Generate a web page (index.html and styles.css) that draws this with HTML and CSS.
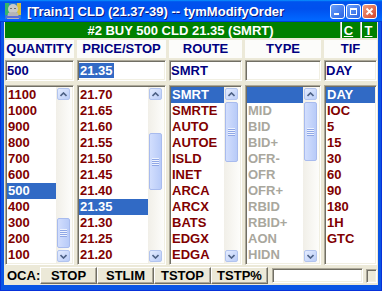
FILE: index.html
```html
<!DOCTYPE html>
<html lang="en">
<head>
    <meta charset="UTF-8">
    <title>tymModifyOrder</title>
    <link rel="stylesheet" href="styles.css">
</head>
<body>

<div class="window">
    <div class="titlebar">
        <svg class="app-icon" width="16" height="16" viewBox="0 0 16 16">
            <rect x="0" y="0" width="16" height="16" fill="#2f7fd0"/>
            <rect x="0" y="0" width="4" height="12" fill="#35b56a"/>
            <rect x="12" y="0" width="4" height="12" fill="#d8c040"/>
            <ellipse cx="8" cy="6" rx="5" ry="5" fill="#c9c9c9"/>
            <path d="M2 16 L3 10 Q8 8 13 10 L14 16 Z" fill="#b5b5b5"/>
            <rect x="5" y="5" width="2" height="1" fill="#707070"/>
            <rect x="9" y="5" width="2" height="1" fill="#707070"/>
            <rect x="1" y="13" width="14" height="2" fill="#5a6fd8"/>
        </svg>
        <span class="title">[Train1] CLD (21.37-39) -- tymModifyOrder</span>
        <div class="title-buttons">
            <span class="tbtn">
                <svg width="13" height="13" viewBox="0 0 13 13"><rect x="3" y="8" width="5" height="2" fill="#fff"/></svg>
            </span>
            <span class="tbtn">
                <svg width="13" height="13" viewBox="0 0 13 13"><rect x="3.5" y="3.5" width="6" height="6" fill="none" stroke="#fff" stroke-width="1"/><rect x="3" y="3" width="7" height="2" fill="#fff"/></svg>
            </span>
            <span class="tbtn close">
                <svg width="13" height="13" viewBox="0 0 13 13"><path d="M3.5 3.5 L9.5 9.5 M9.5 3.5 L3.5 9.5" stroke="#fff" stroke-width="1.8"/></svg>
            </span>
        </div>
    </div>

    <div class="client">
        <div class="orderbar">
            <span class="order-text">#2 BUY 500 CLD 21.35 (SMRT)</span>
            <span class="bar-sep"></span>
            <u class="bar-key">C</u>
            <span class="bar-sep"></span>
            <u class="bar-key">T</u>
        </div>

        <div class="order-grid">
            <div class="head">QUANTITY</div>
            <div class="head">PRICE/STOP</div>
            <div class="head">ROUTE</div>
            <div class="head">TYPE</div>
            <div class="head">TIF</div>

            <div class="field sunken">500</div>
            <div class="field sunken"><span class="sel-text">21.35</span></div>
            <div class="field sunken">SMRT</div>
            <div class="field sunken"></div>
            <div class="field sunken">DAY</div>

            <!-- quantity -->
            <div class="list sunken">
                <div class="items">
                    <div class="item">1100</div>
                    <div class="item">1000</div>
                    <div class="item">900</div>
                    <div class="item">800</div>
                    <div class="item">700</div>
                    <div class="item">600</div>
                    <div class="item selected">500</div>
                    <div class="item">400</div>
                    <div class="item">300</div>
                    <div class="item">200</div>
                    <div class="item">100</div>
                </div>
                <div class="scroll">
                    <div class="sb-btn"><svg width="7" height="5" viewBox="0 0 7 5"><path d="M0.5 4 L3.5 1 L6.5 4" fill="none" stroke="#4d6185" stroke-width="1.6"/></svg></div>
                    <div class="sb-track"><div class="sb-thumb" style="margin-top:118px;height:30px"><span class="grip"></span></div></div>
                    <div class="sb-btn"><svg width="7" height="5" viewBox="0 0 7 5"><path d="M0.5 1 L3.5 4 L6.5 1" fill="none" stroke="#4d6185" stroke-width="1.6"/></svg></div>
                </div>
            </div>

            <!-- price -->
            <div class="list sunken">
                <div class="items">
                    <div class="item">21.70</div>
                    <div class="item">21.65</div>
                    <div class="item">21.60</div>
                    <div class="item">21.55</div>
                    <div class="item">21.50</div>
                    <div class="item">21.45</div>
                    <div class="item">21.40</div>
                    <div class="item selected">21.35</div>
                    <div class="item">21.30</div>
                    <div class="item">21.25</div>
                    <div class="item">21.20</div>
                </div>
                <div class="scroll">
                    <div class="sb-btn"><svg width="7" height="5" viewBox="0 0 7 5"><path d="M0.5 4 L3.5 1 L6.5 4" fill="none" stroke="#4d6185" stroke-width="1.6"/></svg></div>
                    <div class="sb-track"><div class="sb-thumb" style="margin-top:33px;height:57px"><span class="grip"></span></div></div>
                    <div class="sb-btn"><svg width="7" height="5" viewBox="0 0 7 5"><path d="M0.5 1 L3.5 4 L6.5 1" fill="none" stroke="#4d6185" stroke-width="1.6"/></svg></div>
                </div>
            </div>

            <!-- route -->
            <div class="list sunken">
                <div class="items">
                    <div class="item selected">SMRT</div>
                    <div class="item">SMRTE</div>
                    <div class="item">AUTO</div>
                    <div class="item">AUTOE</div>
                    <div class="item">ISLD</div>
                    <div class="item">INET</div>
                    <div class="item">ARCA</div>
                    <div class="item">ARCX</div>
                    <div class="item">BATS</div>
                    <div class="item">EDGX</div>
                    <div class="item">EDGA</div>
                </div>
                <div class="scroll">
                    <div class="sb-btn"><svg width="7" height="5" viewBox="0 0 7 5"><path d="M0.5 4 L3.5 1 L6.5 4" fill="none" stroke="#4d6185" stroke-width="1.6"/></svg></div>
                    <div class="sb-track"><div class="sb-thumb" style="margin-top:2px;height:60px"><span class="grip"></span></div></div>
                    <div class="sb-btn"><svg width="7" height="5" viewBox="0 0 7 5"><path d="M0.5 1 L3.5 4 L6.5 1" fill="none" stroke="#4d6185" stroke-width="1.6"/></svg></div>
                </div>
            </div>

            <!-- type -->
            <div class="list sunken type-list">
                <div class="items">
                    <div class="item selected">&nbsp;</div>
                    <div class="item">MID</div>
                    <div class="item">BID</div>
                    <div class="item">BID+</div>
                    <div class="item">OFR-</div>
                    <div class="item">OFR</div>
                    <div class="item">OFR+</div>
                    <div class="item">RBID</div>
                    <div class="item">RBID+</div>
                    <div class="item">AON</div>
                    <div class="item">HIDN</div>
                </div>
                <div class="scroll">
                    <div class="sb-btn"><svg width="7" height="5" viewBox="0 0 7 5"><path d="M0.5 4 L3.5 1 L6.5 4" fill="none" stroke="#4d6185" stroke-width="1.6"/></svg></div>
                    <div class="sb-track"><div class="sb-thumb" style="margin-top:2px;height:59px"><span class="grip"></span></div></div>
                    <div class="sb-btn"><svg width="7" height="5" viewBox="0 0 7 5"><path d="M0.5 1 L3.5 4 L6.5 1" fill="none" stroke="#4d6185" stroke-width="1.6"/></svg></div>
                </div>
            </div>

            <!-- tif -->
            <div class="list sunken">
                <div class="items">
                    <div class="item selected">DAY</div>
                    <div class="item">IOC</div>
                    <div class="item">5</div>
                    <div class="item">15</div>
                    <div class="item">30</div>
                    <div class="item">60</div>
                    <div class="item">90</div>
                    <div class="item">180</div>
                    <div class="item">1H</div>
                    <div class="item">GTC</div>
                </div>
            </div>
        </div>

        <div class="bottom">
            <span class="oca">OCA:</span>
            <span class="btn">STOP</span>
            <span class="btn">STLIM</span>
            <span class="btn">TSTOP</span>
            <span class="btn">TSTP%</span>
            <span class="textbox sunken"></span>
            <span class="smallbox sunken"></span>
        </div>
    </div>
</div>

</body>
</html>
```

FILE: styles.css
```css
body {
    margin: 0;
    font-family: "Liberation Sans", Arial, sans-serif;
    font-size: 13px;
    font-weight: bold;
}
.window {
    width: 382px;
    height: 291px;
    display: flex;
    flex-direction: column;
    background: #0a55e4;
    box-shadow: inset 1px 0 #0831d9, inset -1px 0 #0831d9, inset 0 -1px #0831d9;
}
.titlebar {
    height: 22px;
    display: flex;
    align-items: center;
    padding-left: 5px;
    color: #fff;
    background: linear-gradient(180deg, #0997ff, #0053ee 8%, #0050ee 40%, #06f 88%, #06f 93%, #005bff 95%, #003dd7 96%, #003dd7);
}
.app-icon {
    flex: none;
}
.title {
    margin-left: 6px;
    flex: 1;
    white-space: nowrap;
    text-shadow: 1px 1px #0a1883;
}
.title-buttons {
    display: flex;
    gap: 1px;
    margin-right: 5px;
}
.tbtn {
    width: 15px;
    height: 15px;
    box-sizing: border-box;
    border: 1px solid #fff;
    border-radius: 3px;
    background: linear-gradient(135deg, #6aa0fa, #2a63e3);
    display: flex;
}
.tbtn.close {
    background: linear-gradient(135deg, #f0a080, #d6422a);
}
.client {
    flex: 1;
    margin: 0 4px 6px;
    padding: 0 1px 1px;
    background: #ece9d8;
}
.orderbar {
    height: 16px;
    display: flex;
    align-items: center;
    background: #008000;
    color: #fff;
}
.order-text {
    flex: 1;
    text-align: center;
    padding-left: 16px;
}
.bar-sep {
    width: 1px;
    height: 16px;
    background: #b8c8b8;
    border-right: 1px solid #fff;
}
.bar-key {
    width: 13px;
    text-align: center;
    margin-right: 5px;
}
.bar-key:last-child {
    margin-right: 2px;
}
.order-grid {
    display: grid;
    grid-template-columns: 69px 89px 73px 76px 53px;
    grid-template-rows: 18px 21px 182px;
    column-gap: 3px;
    row-gap: 2px;
    margin-top: 2px;
}
.head {
    background: #fcfcfa;
    color: #000080;
    text-align: center;
    line-height: 18px;
}
.sunken {
    box-sizing: border-box;
    border: 1px solid;
    border-color: #aca899 #fff #fff #aca899;
    box-shadow: inset 1px 1px #716f64, inset -1px -1px #f1efe2;
    padding: 1px;
}
.field {
    background: #fff;
    color: #000080;
    line-height: 17px;
    white-space: nowrap;
}
.sel-text {
    background: #316ac5;
    color: #fff;
    padding: 0 1px;
}
.list {
    margin-top: 2px;
    height: 180px;
    display: flex;
    background: #fff;
}
.items {
    flex: 1;
}
.item {
    height: 16px;
    line-height: 16px;
    padding-left: 1px;
    color: #800000;
}
.item.selected {
    background: #316ac5;
    color: #fff;
}
.type-list .item {
    color: #a9a79d;
}
.type-list .item.selected {
    color: #fff;
}
.scroll {
    width: 16px;
    box-sizing: border-box;
    padding: 1px 2px 1px 1px;
    display: flex;
    flex-direction: column;
    background: linear-gradient(to right, #f1efe8, #fdfdfb);
}
.sb-btn {
    height: 12px;
    box-sizing: border-box;
    border: 1px solid #b2c4ee;
    border-radius: 2px;
    background: linear-gradient(135deg, #e4ecff, #bacdf8);
    display: flex;
    align-items: center;
    justify-content: center;
}
.sb-track {
    flex: 1;
    display: flex;
    flex-direction: column;
}
.sb-thumb {
    box-sizing: border-box;
    border: 1px solid #a8bbee;
    border-radius: 2px;
    background: linear-gradient(to right, #d2defd, #b8cbf8);
    display: flex;
    align-items: center;
    justify-content: center;
}
.grip {
    width: 7px;
    height: 8px;
    background: repeating-linear-gradient(to bottom, #eef3fe 0 1px, #8fa7e6 1px 2px);
}
.bottom {
    height: 17px;
    display: flex;
    align-items: center;
    margin-top: 2px;
}
.oca {
    width: 35px;
    box-sizing: border-box;
    padding-left: 2px;
    color: #000;
}
.btn {
    width: 57px;
    height: 17px;
    box-sizing: border-box;
    background: #ece9d8;
    border: 1px solid;
    border-color: #fff #716f64 #716f64 #fff;
    box-shadow: inset -1px -1px #aca899;
    text-align: center;
    line-height: 15px;
    color: #000;
}
.textbox {
    margin-left: 4px;
    width: 91px;
    height: 15px;
    background: #fff;
}
.smallbox {
    margin-left: 3px;
    width: 11px;
    height: 14px;
    background: #ece9d8;
}
```
